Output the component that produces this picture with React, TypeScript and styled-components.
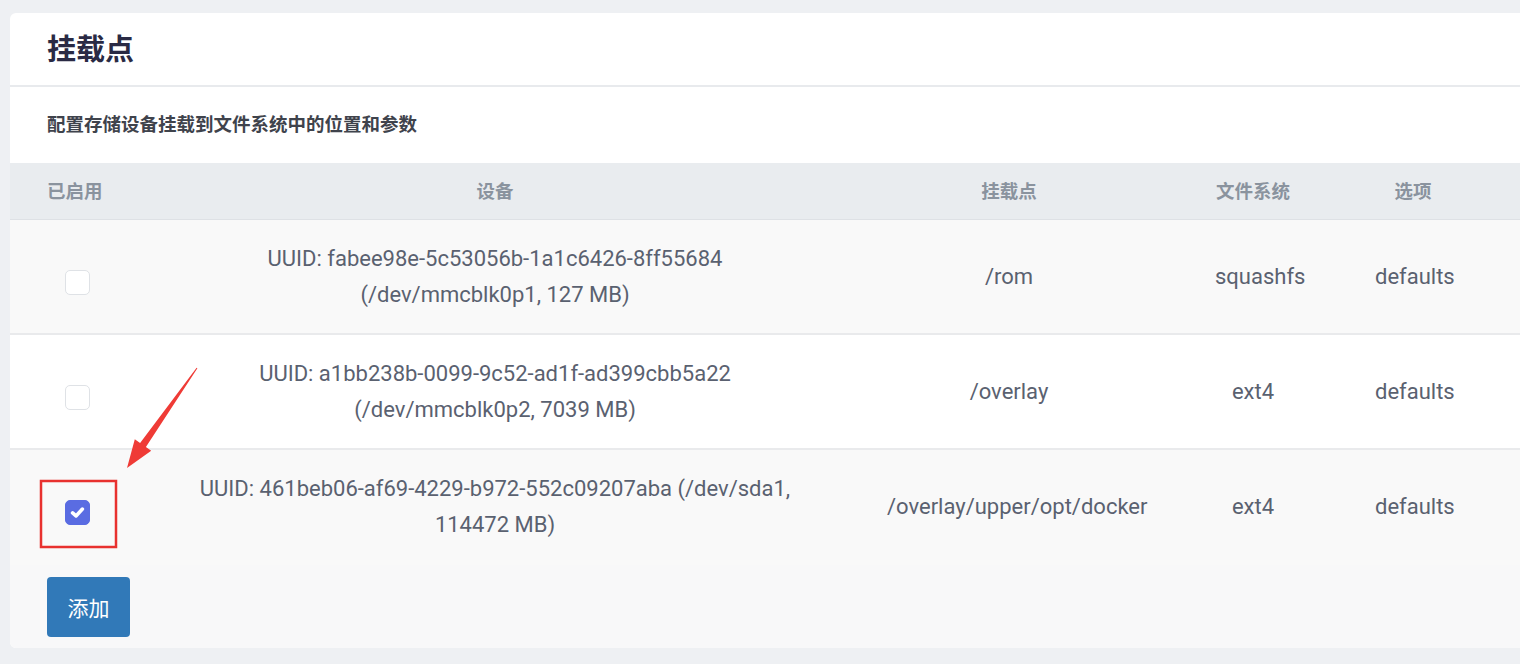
import React from "react";
import styled, { createGlobalStyle } from "styled-components";

const GlobalStyle = createGlobalStyle`
  body {
    margin: 0;
    background: #eef0f3;
    overflow: hidden;
    font-family: Roboto, "Noto Sans CJK SC", sans-serif;
  }
`;

const Page = styled.div`
  position: relative;
  padding: 13px 0 0 10px;
  height: 664px;
  box-sizing: border-box;
`;

const Card = styled.div`
  width: 1560px;
  height: 635px;
  background: #ffffff;
  border-radius: 6px;
  overflow: hidden;
  display: flex;
  flex-direction: column;
`;

const CardHead = styled.div`
  height: 74px;
  display: flex;
  align-items: center;
  padding: 0 0 4px 37px;
  box-sizing: border-box;
  border-bottom: 2px solid #e8eaed;
`;

const Title = styled.h2`
  margin: 0;
  font-family: "Noto Sans CJK SC", sans-serif;
  font-size: 29px;
  font-weight: 700;
  color: #2a2a44;
`;

const Desc = styled.div`
  height: 76px;
  display: flex;
  align-items: center;
  padding: 0 0 5px 37px;
  box-sizing: border-box;
  font-family: "Noto Sans CJK SC", sans-serif;
  font-size: 18.5px;
  font-weight: 700;
  color: #3f434c;
`;

const cols = "135px 700px 328px 160px 160px 1fr";

const HeadRow = styled.div`
  display: grid;
  grid-template-columns: ${cols};
  height: 57px;
  padding-bottom: 3px;
  box-sizing: border-box;
  align-items: center;
  background: #e9ecef;
  border-bottom: 1px solid #dee1e5;
`;

const HeadCell = styled.div<{ $left?: boolean }>`
  text-align: ${(p) => (p.$left ? "left" : "center")};
  padding-left: ${(p) => (p.$left ? "37px" : "0")};
  font-family: "Noto Sans CJK SC", sans-serif;
  font-size: 18.5px;
  font-weight: 700;
  color: #8a939e;
`;

const Row = styled.div<{ $odd: boolean; $last: boolean }>`
  display: grid;
  grid-template-columns: ${cols};
  height: 115px;
  align-items: center;
  background: ${(p) => (p.$odd ? "#f9f9f9" : "#ffffff")};
  border-bottom: 2px solid ${(p) => (p.$last ? "#f9f9f9" : "#e9eaec")};
  box-sizing: border-box;
`;

const Cell = styled.div`
  text-align: center;
  padding: 0 42px;
  font-size: 22px;
  line-height: 36px;
  color: #5a6170;
`;

const CheckCell = styled.div`
  padding: 12px 0 0 37px;
  width: 60px;
  display: flex;
  justify-content: center;
`;

const Check = styled.span<{ $on: boolean }>`
  width: 25px;
  height: 25px;
  box-sizing: border-box;
  border-radius: 5px;
  display: flex;
  align-items: center;
  justify-content: center;
  background: ${(p) => (p.$on ? "#5a6ce2" : "#ffffff")};
  border: 1px solid ${(p) => (p.$on ? "#5a6ce2" : "#dfe2e6")};
`;

const Footer = styled.div`
  flex: 1;
  background: #f8f8f9;
  padding: 12px 0 0 37px;
`;

const AddButton = styled.button`
  width: 83px;
  height: 60px;
  border: none;
  border-radius: 4px;
  background: #3179b8;
  color: #ffffff;
  font-family: "Noto Sans CJK SC", sans-serif;
  font-size: 21px;
  cursor: pointer;
`;

const Annotation = styled.svg`
  position: absolute;
  left: 0;
  top: 0;
  pointer-events: none;
`;

const mounts = [
  {
    on: false,
    device: "UUID: fabee98e-5c53056b-1a1c6426-8ff55684 (/dev/mmcblk0p1, 127 MB)",
    target: "/rom",
    fs: "squashfs",
  },
  {
    on: false,
    device: "UUID: a1bb238b-0099-9c52-ad1f-ad399cbb5a22 (/dev/mmcblk0p2, 7039 MB)",
    target: "/overlay",
    fs: "ext4",
  },
  {
    on: true,
    device: "UUID: 461beb06-af69-4229-b972-552c09207aba (/dev/sda1, 114472 MB)",
    target: "/overlay/upper/opt/docker",
    fs: "ext4",
  },
];

export default () => {
  return (
    <Page>
      <GlobalStyle />
      <Card>
        <CardHead>
          <Title>挂载点</Title>
        </CardHead>
        <Desc>配置存储设备挂载到文件系统中的位置和参数</Desc>
        <HeadRow>
          <HeadCell $left>已启用</HeadCell>
          <HeadCell>设备</HeadCell>
          <HeadCell>挂载点</HeadCell>
          <HeadCell>文件系统</HeadCell>
          <HeadCell>选项</HeadCell>
          <div />
        </HeadRow>
        {mounts.map((m, i) => (
          <Row key={m.device} $odd={i % 2 === 0} $last={i === mounts.length - 1}>
            <CheckCell>
              <Check $on={m.on}>
                {m.on && (
                  <svg width="17" height="17" viewBox="0 0 16 16">
                    <path
                      d="M3.4 8.4 L6.6 11.2 L12.6 4.8"
                      fill="none"
                      stroke="#fff"
                      strokeWidth="3.4"
                      strokeLinecap="round"
                      strokeLinejoin="round"
                    />
                  </svg>
                )}
              </Check>
            </CheckCell>
            <Cell>{m.device}</Cell>
            <Cell>{m.target}</Cell>
            <Cell>{m.fs}</Cell>
            <Cell>defaults</Cell>
            <div />
          </Row>
        ))}
        <Footer>
          <AddButton>添加</AddButton>
        </Footer>
      </Card>
      <Annotation width="1520" height="664">
        <rect x="41" y="481" width="75" height="66" fill="none" stroke="#e8312f" strokeWidth="2.5" />
        <polygon
          points="197.4,368.3 145.9,447 151.2,450.7 127,468 134.8,439.3 140.1,443 196.6,367.7"
          fill="#ef3b36"
        />
      </Annotation>
    </Page>
  );
};
